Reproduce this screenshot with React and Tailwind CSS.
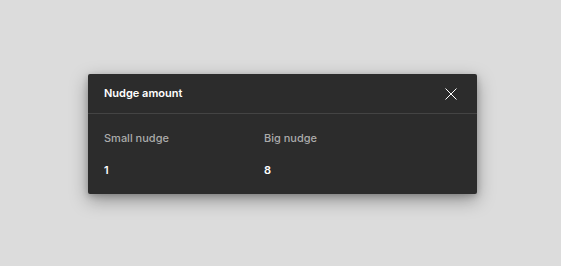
import React from "react";

function CloseIcon() {
  return (
    <svg width="12" height="12" viewBox="0 0 12 12" fill="none">
      <path d="M0.5 0.5L11.5 11.5M11.5 0.5L0.5 11.5" stroke="#ffffff" strokeWidth="1" />
    </svg>
  );
}

function NudgeField({ label, value }) {
  return (
    <div className="flex flex-col gap-4 w-[160px]">
      <span className="text-[11px] leading-4 font-medium text-[#ababab]">{label}</span>
      <span className="text-[11px] leading-4 font-semibold text-white">{value}</span>
    </div>
  );
}

export default function App() {
  return (
    <div
      className="flex h-screen w-full items-center justify-center bg-[#dcdcdc] pl-1 pt-[2px]"
      style={{ fontFamily: "Inter, 'Noto Sans', sans-serif" }}
    >
      <div className="w-[389px] rounded-[2px] bg-[#2c2c2c] shadow-[0_6px_18px_rgba(0,0,0,0.35),0_2px_6px_rgba(0,0,0,0.2)]">
        <div className="flex h-10 items-center justify-between border-b border-[#444444] pl-4 pr-[14px]">
          <span className="text-[11px] font-semibold text-white">Nudge amount</span>
          <button type="button" className="flex h-6 w-6 items-center justify-center">
            <CloseIcon />
          </button>
        </div>
        <div className="flex px-4 py-4">
          <NudgeField label="Small nudge" value="1" />
          <NudgeField label="Big nudge" value="8" />
        </div>
      </div>
    </div>
  );
}
